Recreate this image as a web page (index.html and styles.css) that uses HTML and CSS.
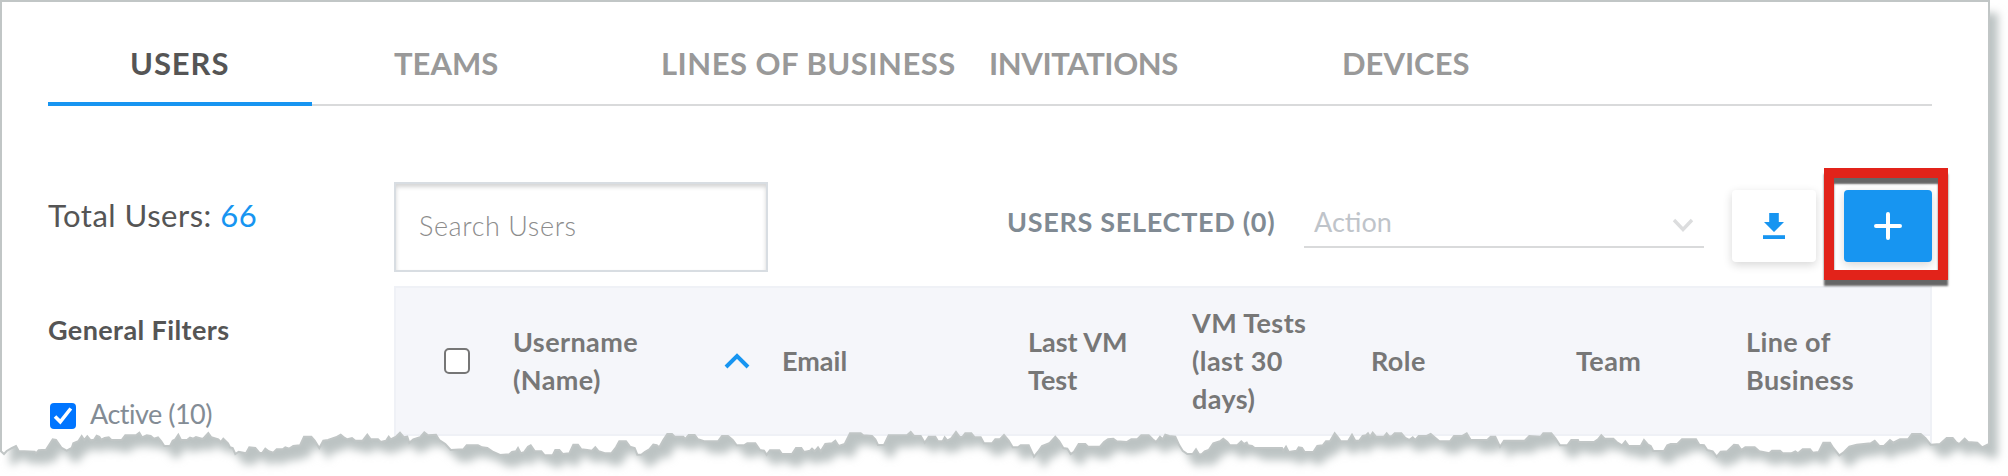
FILE: index.html
```html
<!DOCTYPE html>
<html lang="en">
<head>
<meta charset="utf-8">
<title>Users</title>
<link rel="stylesheet" href="styles.css">
</head>
<body>
<div class="page">
  <nav class="tabs">
    <a class="tab tab-users active"><span>USERS</span></a>
    <a class="tab tab-teams"><span>TEAMS</span></a>
    <a class="tab tab-lines"><span>LINES OF BUSINESS</span></a>
    <a class="tab tab-invites"><span>INVITATIONS</span></a>
    <a class="tab tab-devices"><span>DEVICES</span></a>
  </nav>
  <div class="content">
    <aside class="sidebar">
      <div class="total"><span class="total-label">Total Users:</span> <span class="count">66</span></div>
      <div class="filters-title">General Filters</div>
      <div class="filter">
        <svg class="check" viewBox="0 0 26 26"><rect width="26" height="26" rx="4" fill="#0075ff"/><path d="M5 13.5 L10.3 18.8 L20.8 5.5" fill="none" stroke="#fff" stroke-width="3.6"/></svg>
        <span class="filter-label">Active (10)</span>
      </div>
    </aside>
    <main class="main">
      <div class="toolbar">
        <div class="search"><span>Search Users</span></div>
        <div class="selected"><span>USERS SELECTED (0)</span></div>
        <div class="action"><span>Action</span>
          <svg class="chevron" viewBox="0 0 22 14"><path d="M2 2 L11 11.5 L20 2" fill="none" stroke="#dcddde" stroke-width="3.4"/></svg>
        </div>
        <button class="btn download">
          <svg width="22" height="26" viewBox="0 0 22 26"><path d="M6.2 0h9.6v9H21L11 19 1 9h5.200z" fill="#1795f1"/><path d="M0 22.200h22v3.800H0z" fill="#1795f1"/></svg>
        </button>
        <button class="btn add">
          <svg width="28" height="28" viewBox="0 0 28 28"><path d="M14 2V26M2 14H26" stroke="#fff" stroke-width="4" stroke-linecap="round"/></svg>
          <span class="highlight"></span>
        </button>
      </div>
      <div class="thead">
        <div class="th c-check"><span class="box"></span></div>
        <div class="th c-user"><span>Username<br>(Name)</span>
          <svg class="sort" viewBox="0 0 26 16"><path d="M2 14 L13 3 L24 14" fill="none" stroke="#1795f1" stroke-width="4"/></svg>
        </div>
        <div class="th c-email">Email</div>
        <div class="th c-last">Last VM<br>Test</div>
        <div class="th c-tests">VM Tests<br>(last 30<br>days)</div>
        <div class="th c-role">Role</div>
        <div class="th c-team">Team</div>
        <div class="th c-line">Line of<br>Business</div>
      </div>
      <div class="tbody"></div>
    </main>
  </div>
  <svg class="paper" width="2008" height="476" viewBox="0 0 2008 476">
    <defs>
      <clipPath id="outside"><path id="outer" clip-rule="evenodd"/></clipPath>
      <filter id="soft" x="-5%" y="-5%" width="110%" height="110%"><feGaussianBlur stdDeviation="4"/></filter>
    </defs>
    <g clip-path="url(#outside)">
      <rect width="2008" height="476" fill="#fff"/>
      <path id="shade" fill="#bcc3c3" filter="url(#soft)"/>
    </g>
    <path id="rim" fill="none" stroke="#c1c6c6" stroke-width="2"/>
  </svg>
</div>
<script src="edge.js"></script>
</body>
</html>
```
FILE: styles.css
```css
* { box-sizing: border-box; }
body { margin: 0; background: #fff; font-family: Lato, "Open Sans", sans-serif; }
.page { position: relative; width: 2008px; height: 476px; overflow: hidden; padding: 2px 76px 0 48px; }
.tabs { display: flex; width: 1884px; height: 104px; border-bottom: 2px solid #d9dadb; font-size: 31px; font-weight: 700; line-height: 38px; color: #999; white-space: nowrap; }
.tab { height: 104px; padding-top: 42px; }
.tab-users { width: 264px; padding-left: 82px; letter-spacing: .9px; }
.tab-teams { width: 264px; padding-left: 82px; }
.tab-lines { width: 413px; padding-left: 85px; letter-spacing: .5px; }
.tab-invites { width: 353px; letter-spacing: -.4px; }
.active { color: #555; border-bottom: 4px solid #1795f1; }
.content { display: flex; }
.sidebar { width: 346px; padding-top: 90px; }
.total { font-size: 31px; line-height: 38px; color: #555; letter-spacing: .5px; white-space: nowrap; }
.count { color: #1795f1; }
.filters-title { margin-top: 80px; font-size: 27px; line-height: 32px; font-weight: 700; color: #555; letter-spacing: .4px; }
.filter { display: flex; align-items: center; gap: 14px; margin-top: 55px; padding-left: 2px; font-size: 27px; line-height: 32px; color: #838c95; }
.filter-label { letter-spacing: -.5px; margin-top: -3px; }
.check { width: 26px; height: 26px; }
.main { width: 1538px; padding-top: 76px; }
.toolbar { display: flex; height: 104px; white-space: nowrap; }
.search { width: 374px; height: 90px; padding: 26px 23px; border: 2px solid #d8dde2; box-shadow: inset 0 3px 4px rgba(0,0,0,.17); font-size: 27px; line-height: 32px; font-weight: 300; letter-spacing: .6px; color: #8c8c8c; }
.selected { width: 536px; margin-top: -10px; padding: 34px 0 0 239px; font-size: 27px; line-height: 32px; font-weight: 700; letter-spacing: .7px; color: #808a93; }
.action { display: flex; justify-content: space-between; align-items: flex-start; width: 400px; height: 66px; padding: 24px 10px 0; border-bottom: 2px solid #d9dadb; font-size: 27px; line-height: 32px; color: #bfc4ca; }
.chevron { width: 22px; height: 14px; margin-top: 12px; }
.btn { position: relative; display: flex; align-items: center; justify-content: center; height: 72px; margin-top: 8px; padding: 0; border: 0; border-radius: 4px; background: #fff; box-shadow: 0 3px 10px rgba(0,0,0,.16); }
.download { width: 84px; margin-left: 28px; }
.add { width: 88px; margin-left: 28px; background: #1795f1; }
.highlight { position: absolute; left: -20px; top: -22px; width: 124px; height: 112px; border: 10px solid #e2231a; box-shadow: 0 6px 2px #666, inset 0 6px 2px #666; }
.thead { display: flex; align-items: center; height: 150px; border: 2px solid #eff1f6; background: #f5f6fa; font-size: 27px; line-height: 38px; font-weight: 700; letter-spacing: .4px; color: #777; white-space: nowrap; }
.tbody { height: 30px; border-right: 2px solid #eff1f6; }
.c-check { width: 117px; padding-left: 48px; }
.box { display: block; width: 26px; height: 26px; border: 2px solid #767676; border-radius: 5px; background: #fff; }
.c-user { display: flex; align-items: center; justify-content: space-between; width: 237px; margin-right: 32px; }
.sort { width: 26px; height: 16px; }
.c-email { width: 246px; letter-spacing: 0; }
.c-last { width: 164px; letter-spacing: 0; }
.c-tests { width: 179px; }
.c-role { width: 205px; }
.c-team { width: 170px; }
.paper { position: absolute; left: 0; top: 0; }
```
FILE: edge.js
```js
// Torn bottom edge of the page, in thirds of a pixel below y = 270.
const parts = [
  "0,544 12,552 20,543 36,534 48,528 56,543 104,545 108,550 116,541 138,539 158,508 168,510 185,534 200,542 215,534 220,520 235,514 245,498 253,510 262,499 272,511 282,509 290,497 298,500 304,509 314,504 326,502 334,510 366,509 376,496 408,496 418,488 426,502 440,496 452,498 462,506 474,502 484,514 493,528 510,528 518,512 526,508 535,494 543,510 562,509 570,503 580,506 588,501 608,507 614,501 625,489 634,502 655,508 662,516 670,506 684,520 690,532 698,534 706,552 716,545 738,550 748,532 766,534 778,548 786,550 796,536 806,544 820,548 830,538 848,538 856,532 868,536 880,528 900,526 912,500 934,500 944,512 958,534 970,512 984,510 1008,502 1022,494 1034,504 1042,508 1056,504 1066,512 1088,512 1102,494 1112,508 1134,508 1142,516 1158,512 1166,500 1172,508 1188,500 1200,488 1212,502 1222,500 1228,518 1240,508 1260,502 1273,487 1284,496 1308,494 1318,510 1336,522 1352,540 1390,538 1400,526 1434,526 1446,532 1462,534 1480,546",
  "0,555 28,553 36,546 48,544 54,534 62,550 72,547 84,530 92,526 104,543 124,544 134,556 158,556 166,540 178,540 188,552 208,550 220,524 234,524 244,538 262,540 276,542 286,532 296,544 314,550 334,550 348,532 358,514 378,514 390,530 404,534 412,554 424,554 434,546 448,538 460,524 470,526 478,532 490,510 502,492 516,492 524,500 550,500 556,507 566,495 584,495 594,508 612,514 654,514 666,498 684,498 698,510 710,526 732,526 742,520 766,520 780,540 792,542 800,554 810,541 838,541 846,552 876,552 888,534 904,534 912,546 930,542 936,536 944,544 954,532 962,544 976,522 996,520 1006,512 1016,528 1034,522 1050,490 1082,490 1090,496 1116,498 1126,508 1134,525 1152,525 1166,496 1222,495 1232,486 1242,498 1262,498 1274,518 1286,500 1306,500 1314,514 1328,514 1334,502 1342,512 1354,505 1368,486 1380,502 1388,500 1396,490 1414,490 1424,502 1442,502 1452,520 1476,520 1486,508",
  "0,508 12,495 26,512 38,532 54,532 62,526 86,526 102,560 114,545 126,528 148,520 166,500 178,514 190,534 202,536 212,552 222,545 236,522 256,522 264,530 300,530 312,516 324,508 340,506 350,514 380,516 394,508 412,508 424,496 446,496 458,508 468,516 480,500 488,508 496,494 508,498 526,500 538,526 548,542 562,552 578,552 588,538 598,554 606,552 614,544 626,540 640,520 660,514 670,506 682,516 690,526 712,526 724,514 732,522 740,518 744,526 756,528 764,534 846,534 850,542 858,530 866,546 890,542 896,532 906,534 914,546 940,546 952,528 968,526 978,514 990,514 1004,490 1014,502 1022,514 1044,514 1056,494 1066,512 1078,512 1088,498 1098,496 1104,490 1110,500 1118,488 1128,500 1152,500 1160,490 1168,500 1176,498 1184,490 1204,490 1216,504 1228,510 1238,502 1246,510 1256,498 1280,498 1292,492 1302,500 1318,514 1350,514 1362,498 1386,498 1400,490 1412,510 1462,510 1472,500 1486,500",
  "0,530 12,512 74,512 88,498 122,500 130,490 154,490 166,504 180,526 202,526 214,510 234,510 236,516 282,516 294,508 304,496 314,506 340,506 350,516 366,526 376,514 386,528 422,528 432,510 444,524 452,528 460,543 492,543 502,526 512,522 532,522 546,508 588,508 598,524 612,526 622,540 638,544 650,560 662,545 682,544 702,524 714,526 724,540 736,532 764,532 778,544 808,550 816,542 840,542 848,550 874,550 886,544 894,550 908,538 930,538 938,548 956,546 970,518 990,518 1000,534 1018,556 1030,548 1048,530 1070,524 1112,520 1124,512 1138,528 1152,528 1170,510 1180,518 1200,508 1224,508 1236,492 1262,492 1276,504 1292,524 1320,522 1340,504 1358,504 1368,516 1378,522 1394,506 1404,516 1432,518 1446,532 1467,522"
];
const points = parts.flatMap((part, i) => part.split(" ").map(pair => {
  const [x, y] = pair.split(",").map(Number);
  return [(x / 3 + i * 500), y / 3 + 270];
}));
const outline = (dx, dy) =>
  `M${1 + dx} ${1 + dy}L` + points.map(([x, y]) => `${(Math.max(1, x) + dx).toFixed(1)} ${(y + dy).toFixed(1)}`).join("L") +
  `L${1989 + dx} ${1 + dy}Z`;
document.getElementById("outer").setAttribute("d", "M0 0H2008V476H0Z" + outline(0, 0));
document.getElementById("shade").setAttribute("d", outline(9, 12));
document.getElementById("rim").setAttribute("d", outline(0, 0));
```
